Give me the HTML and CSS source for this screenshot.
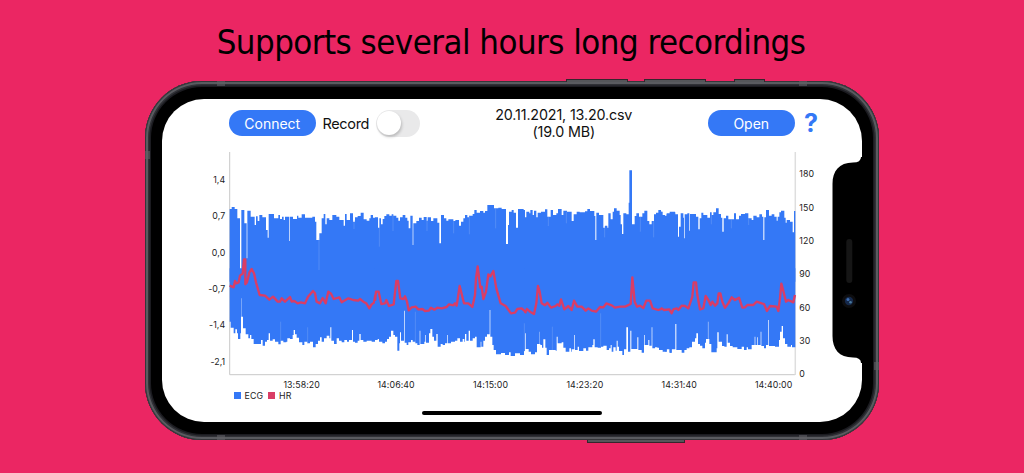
FILE: index.html
```
<!DOCTYPE html>
<html lang="en">
<head>
    <meta charset="UTF-8">
    <meta name="viewport" content="width=device-width, initial-scale=1.0">
    <title>ECG Recorder</title>
    <link rel="stylesheet" href="styles.css">
</head>
<body>
    <h1>Supports several hours long recordings</h1>

    <div class="phone">
        <!-- Side buttons -->
        <span class="key key-down"></span>
        <span class="key key-up"></span>
        <span class="key key-mute"></span>
        <span class="key key-power"></span>

        <!-- Antenna bands -->
        <span class="band band-tl"></span>
        <span class="band band-tr"></span>
        <span class="band band-bl"></span>
        <span class="band band-br"></span>
        <span class="band band-left"></span>
        <span class="band band-right"></span>

        <div class="screen">
            <div class="toolbar">
                <button class="pill">Connect</button>
                <span class="record">Record</span>
                <span class="toggle"></span>
                <p class="file">20.11.2021, 13.20.csv<br>(19.0 MB)</p>
                <button class="pill open">Open</button>
                <span class="help">?</span>
            </div>

            <!-- Chart -->
            <svg class="chart" width="700" height="233" viewBox="162 146 700 233">
                <path class="axis" d="M229.7 152V374.7H795"/>
                <path class="axis axis-right" d="M795.3 152V375"/>

                <g transform="translate(225 195) scale(.33333)">
                    <path class="ecg" d="M14 260V42H20V36H29V42H37V70H45V225H49V45H58V85H65V190H67V47H77V65H89V90H93V64H98V78H103V60H112V67H123V105H128V128H131V57H147V70H160V60H165V72H171V65H176V75H180V65H193V138H195V65H204V72H216V62H220V68H230V58H240V68H262V65H270V80H274V135H283V115H290V70H296V57H301V88H305V70H313V75H322V60H334V65H343V75H356V92H360V57H365V75H375V55H384V80H390V67H398V63H407V53H416V73H425V77H433V70H437V60H444V68H450V260Z"/>
                    <path class="ecg" d="M14 220V380H17V398H26V415H31V403H36V415H39V432H46V415H48V365H50V310H51V365H54V400H62V418H70V430H75V420H79V432H86V447H108V435H113V452H120V440H126V435H131V415H135V437H143V433H150V440H160V448H167V437H175V442H184V440H187V430H195V432H203V420H206V405H210V418H215V428H222V442H232V450H238V440H247V445H255V440H264V457H272V447H279V437H285V427H290V440H297V430H305V422H313V430H316V397H319V437H327V447H335V430H342V437H350V442H358V435H366V440H372V435H381V405H384V440H390V443H398V437H403V417H407V435H415V440H425V437H440V440H450V220Z"/>
                    <path class="gap" d="M282 130V225M387 75V102M167 437V380M248 445V397"/>
                    <path class="hr" d="M14 272L26 277 30 258 34 265 41 262 45 242 53 236 57 193 61 193 61 268 66 262 73 233 80 222 87 235 93 262 104 300 120 302 133 314 144 305 158 320 165 320 170 310 180 320 195 306 200 320 208 318 218 325 228 322 240 325 249 305 264 288 270 295 275 320 285 325 293 309 302 325 310 290 318 296 326 312 343 307 350 322 370 310 385 315 400 317 405 312 415 320 424 325 433 340 440 328 447 323 451 300"/>
                </g>
                <g transform="translate(375 195) scale(.33333)">
                    <path class="ecg" d="M0 260V67H9V98H13V70H18V88H23V72H28V63H34V58H43V62H50V58H55V62H64V68H70V77H75V67H83V60H91V68H97V77H101V100H106V62H113V150H115V85H124V78H132V68H140V75H146V66H155V77H158V67H168V78H175V70H187V83H193V145H198V60H207V70H214V77H220V73H235V78H241V75H252V92H258V80H265V70H270V60H277V67H282V62H293V57H298V45H305V53H315V48H325V53H330V48H337V30H357V40H370V38H380V42H393V147H399V90H402V50H410V45H416V53H423V98H429V42H446V45H450V260Z"/>
                    <path class="ecg" d="M0 220V435H8V432H12V440H22V445H30V440H36V432H42V425H48V407H55V420H60V425H67V467H73V445H75V412H78V437H87V347H89V443H95V450H100V442H108V435H113V440H121V445H127V450H134V407H136V447H148V440H151V420H153V443H162V415H166V402H172V425H177V437H184V417H188V455H197V447H203V450H210V445H216V420H218V445H228V440H240V437H247V430H255V440H263V432H268V440H270V417H274V437H281V407H285V437H293V430H300V425H305V457H317V440H319V455H325V437H330V425H336V418H344V345H346V425H352V450H356V465H363V478H378V474H390V480H402V472H407V483H420V475H435V480H447V468H450V220Z"/>
                    <path class="gap" d="M13 70V155M54 60V108M156 75V108M236 75V115M283 62V118M362 40V100M121 445V350M448 470V385"/>
                    <path class="hr" d="M0 318L3 290 11 290 19 327 30 325 34 315 42 333 56 328 64 258 69 258 76 310 86 312 90 304 96 320 101 346 110 337 122 335 130 343 142 342 150 348 162 347 168 338 178 344 187 338 200 340 215 336 222 328 235 331 240 325 245 332 254 273 267 325 280 325 292 336 300 300 303 250 308 214 316 278 320 275 325 312 333 290 340 238 346 244 355 228 364 280 377 325 392 333 408 355 420 353 427 342 440 340 451 350"/>
                </g>
                <g transform="translate(525 160) scale(.33333)">
                    <path class="ecg" d="M0 360V172H4V155H13V160H16V150H23V165H27V152H34V172H38V158H48V155H60V148H67V170H77V150H84V165H94V160H99V147H110V165H115V152H126V155H140V183H146V163H155V155H164V157H180V154H187V147H195V153H208V168H211V240H214V158H222V165H235V203H240V197H247V203H250V160H257V178H263V155H267V145H275V152H284V165H287V193H291V222H295V160H304V163H311V128H313V31H321V193H329V168H334V160H342V170H352V160H358V152H367V183H373V193H380V183H387V163H393V158H400V150H408V155H413V165H420V167H425V160H434V155H450V360Z"/>
                    <path class="ecg" d="M0 320V520H2V567H11V575H18V583H30V577H36V552H42V515H43V552H46V555H51V563H55V538H61V563H65V585H72V570H92V572H95V530H98V550H110V547H115V563H122V575H133V565H138V575H140V568H148V525H150V570H158V560H162V573H175V565H183V572H190V562H202V555H205V538H209V562H218V563H228V560H235V557H245V570H252V565H257V555H260V575H265V562H272V572H275V542H278V560H282V573H292V585H297V568H304V502H309V575H316V512H319V567H337V532H340V570H350V578H357V525H359V555H370V540H373V557H380V502H382V565H390V562H397V563H402V570H413V575H425V568H435V578H440V565H450V320Z"/>
                    <path class="gap" d="M70 170V198M124 155V190M239 198V232M346 170V215M386 183V232M82 570V500M227 560V460"/>
                    <path class="hr" d="M0 460L6 447 15 455 27 462 34 430 39 378 44 395 50 430 60 436 67 428 78 443 92 438 97 433 103 437 108 418 118 448 130 438 140 450 147 422 157 440 170 440 182 452 190 445 200 452 213 455 225 441 235 442 244 430 260 436 270 443 285 440 300 440 317 432 322 352 329 425 336 440 345 437 355 444 364 422 375 422 383 445 400 450 406 448"/>
                </g>
                <g transform="translate(660 195) scale(.33333)">
                    <path class="ecg" d="M0 260V50H5V60H15V65H20V57H30V52H46V58H54V125H57V95H62V55H70V68H72V130H74V58H82V55H88V107H90V57H108V65H115V103H119V70H124V53H130V60H142V68H150V52H155V60H160V52H168V40H176V57H183V68H187V110H191V70H198V62H205V73H222V55H228V73H237V62H243V57H255V55H265V70H275V75H280V62H290V67H298V58H306V65H310V135H313V67H318V45H327V62H335V58H343V65H350V77H353V65H358V52H363V47H373V68H377V83H380V75H390V80H398V112H402V48H406V260Z"/>
                    <path class="ecg" d="M0 220V465H12V463H16V470H20V462H28V473H35V463H46V387H49V465H65V473H73V465H80V460H88V457H96V440H105V430H109V415H114V447H120V452H127V460H135V443H138V432H144V380H145V432H148V447H154V472H170V460H172V412H176V440H186V453H193V455H200V418H203V443H210V453H218V457H232V462H245V455H252V465H260V457H264V463H275V450H284V425H286V450H292V427H294V450H302V410H304V453H312V460H318V450H325V375H327V453H345V455H357V435H360V410H365V393H369V430H375V447H382V455H393V450H396V457H406V220Z"/>
                    <path class="gap" d="M214 73V100M154 60V88M266 70V90M144 430V380"/>
                    <path class="hr" d="M0 345L5 340 12 345 28 343 35 355 40 343 50 340 55 345 65 332 75 333 85 340 97 305 101 262 108 262 112 300 120 343 130 340 137 303 145 315 152 330 157 320 165 332 172 325 176 295 181 295 187 320 195 338 205 325 215 307 225 315 237 308 247 338 255 337 262 330 280 330 290 320 305 325 312 327 321 348 330 333 350 335 355 348 360 310 364 266 368 280 378 320 385 315 400 322 405 300"/>
                </g>

                <g class="labels" text-anchor="end">
                    <text x="225.3" y="183.2">1,4</text>
                    <text x="225.3" y="219.4">0,7</text>
                    <text x="225.3" y="255.7">0,0</text>
                    <text x="225.3" y="292">-0,7</text>
                    <text x="225.3" y="328.3">-1,4</text>
                    <text x="225.3" y="364.6">-2,1</text>
                </g>
                <g class="labels">
                    <text x="799.3" y="177">180</text>
                    <text x="799.3" y="210.5">150</text>
                    <text x="799.3" y="243.9">120</text>
                    <text x="799.3" y="277.2">90</text>
                    <text x="799.3" y="310.6">60</text>
                    <text x="799.3" y="344">30</text>
                    <text x="799.3" y="377.4">0</text>
                </g>
            </svg>

            <div class="times">
                <span>13:58:20</span>
                <span>14:06:40</span>
                <span>14:15:00</span>
                <span>14:23:20</span>
                <span>14:31:40</span>
                <span>14:40:00</span>
            </div>
            <div class="legend">
                <i class="swatch swatch-ecg"></i><span>ECG</span>
                <i class="swatch swatch-hr"></i><span>HR</span>
            </div>
            <div class="home-bar"></div>

            <!-- Notch with speaker and camera -->
            <svg class="notch" width="31" height="206" viewBox="0 0 31 206">
                <path d="M31 0H30Q30 5.500 22 5.500C8 5.500 1.500 14 1.500 27V179C1.500 192 8 200.500 22 200.500Q30 200.500 30 206H31Z"/>
                <rect x="15.300" y="82" width="6" height="44" rx="3" fill="#161616"/>
                <circle cx="18" cy="144" r="7" fill="#0d0d0f"/>
                <circle cx="18" cy="144" r="4.200" fill="#15284a"/>
                <circle cx="17" cy="142.500" r="1.500" fill="#3e6db0"/>
                <circle cx="19.500" cy="145.200" r="1.300" fill="#49799e"/>
            </svg>
        </div>
    </div>
</body>
</html>
```

FILE: styles.css
```
* {
    margin: 0;
    padding: 0;
    box-sizing: border-box;
}

body {
    width: 1024px;
    height: 473px;
    background: #eb2663;
    font-family: Inter, 'Liberation Sans', sans-serif;
    color: #111;
    overflow: hidden;
}

h1 {
    height: 81px;
    padding-top: 21px;
    font: 400 34.500px/42px 'DejaVu Sans Condensed', 'DejaVu Sans', sans-serif;
    font-stretch: condensed;
    letter-spacing: -0.53px;
    text-align: center;
    text-indent: -2px;
    white-space: nowrap;
    color: #000;
}

/* Phone body */
.phone {
    position: relative;
    width: 734.500px;
    height: 359px;
    margin-left: 144.500px;
    padding: 18px 17px;
    border-radius: 57px;
    background: #000;
    box-shadow: inset 0 0 0 1px #35363a, inset 0 0 0 3px #5a5b60, inset 0 0 0 4.500px #303136, inset 0 0 0 6px #1b1b20;
}

.key {
    position: absolute;
    top: -2px;
    height: 3px;
    background: #55565a;
    border: 1px solid #35262d;
    border-bottom: 0;
}

.key-down {
    left: 421px;
    width: 62px;
}

.key-up {
    left: 499px;
    width: 62px;
}

.key-mute {
    left: 589px;
    width: 31px;
}

.key-power {
    top: auto;
    bottom: -3px;
    left: 442px;
    width: 98px;
    border-bottom: 1px solid #35262d;
    border-top: 0;
}

.band {
    position: absolute;
    width: 8px;
    height: 5px;
    background: #606166;
    opacity: 0.6;
}

.band-tl {
    top: 0;
    left: 72px;
}

.band-tr {
    top: 0;
    right: 72px;
}

.band-bl {
    bottom: 0;
    left: 72px;
}

.band-br {
    bottom: 0;
    right: 72px;
}

.band-left {
    top: 70px;
    left: 0;
    width: 5px;
    height: 8px;
}

.band-right {
    bottom: 70px;
    right: 0;
    width: 5px;
    height: 8px;
}

/* Screen */
.screen {
    position: relative;
    width: 700px;
    height: 323px;
    border-radius: 42px;
    background: #fff;
    overflow: hidden;
}

.toolbar {
    display: flex;
    align-items: center;
    height: 47px;
    padding: 1px 0 0 67.500px;
}

.pill {
    width: 86.500px;
    height: 26px;
    border: none;
    border-radius: 13px;
    background: #3478f6;
    color: #fff;
    font: 400 14px Inter, sans-serif;
}

.record {
    width: 47px;
    margin-left: 7px;
    font-size: 14.500px;
    letter-spacing: -0.35px;
}

.toggle {
    width: 44px;
    height: 27px;
    margin-left: 6px;
    padding: 1.500px;
    border-radius: 14px;
    background: #e9e9ea;
}

.toggle::before {
    content: '';
    display: block;
    width: 24px;
    height: 24px;
    border-radius: 50%;
    background: #fff;
    box-shadow: 1px 2px 3px rgba(0, 0, 0, 0.2);
}

.file {
    width: 288.500px;
    font-size: 14.300px;
    letter-spacing: -0.15px;
    line-height: 17.500px;
    text-align: center;
}

.help {
    margin-left: 9.500px;
    font-size: 25px;
    font-weight: 700;
    color: #3478f6;
}

/* Chart */
.chart {
    display: block;
}

.axis {
    fill: none;
    stroke: #c8c8c8;
}

.axis-right {
    stroke: #dedede;
    stroke-width: 1.500;
}

.ecg {
    fill: #3478f6;
}

.gap {
    fill: none;
    stroke: #8db5fa;
    stroke-width: 1.500;
    opacity: 0.7;
}

.hr {
    fill: none;
    stroke: #d93d66;
    stroke-width: 7;
    stroke-linejoin: round;
}

.labels,
.times,
.legend {
    font-size: 8.800px;
    letter-spacing: 0.1px;
    fill: #222;
    color: #222;
}

.times {
    display: grid;
    grid-template-columns: repeat(6, 94.400px);
    height: 11px;
    margin-left: 93px;
    line-height: 11px;
    text-align: center;
}

.legend {
    display: flex;
    align-items: center;
    height: 10px;
    margin-left: 72px;
}

.swatch {
    width: 7px;
    height: 7px;
    margin-right: 4px;
}

.swatch-ecg {
    background: #3478f6;
}

.swatch-hr {
    margin-left: 5px;
    background: #d93d66;
}

.home-bar {
    width: 180px;
    height: 4px;
    margin: 11px auto 0;
    border-radius: 2px;
    background: #000;
}

.notch {
    position: absolute;
    top: 58px;
    right: 0;
}
```
